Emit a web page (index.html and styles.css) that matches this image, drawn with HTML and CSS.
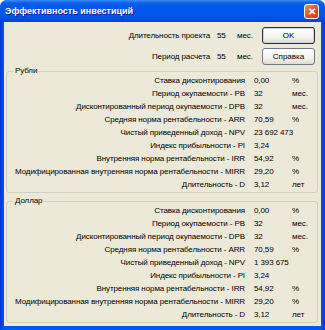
FILE: index.html
```html
<!DOCTYPE html>
<html lang="ru">
<head>
    <meta charset="UTF-8">
    <title>Эффективность инвестиций</title>
    <link rel="stylesheet" href="styles.css">
</head>
<body>
    <div class="window">
        <div class="titlebar">
            <span class="title">Эффективность инвестиций</span>
            <span class="close">&#x2715;</span>
        </div>
        <div class="content">
            <div class="top">
                <span class="label">Длительность проекта</span>
                <span class="value">55</span>
                <span class="unit">мес.</span>
                <button class="btn btn-default">OK</button>

                <span class="label">Период расчета</span>
                <span class="value">55</span>
                <span class="unit">мес.</span>
                <button class="btn">Справка</button>
            </div>

            <div class="group">
                <span class="legend">Рубли</span>
                <div class="rows">
                    <span class="label">Ставка дисконтирования</span><span class="value">0,00</span><span class="unit">%</span>
                    <span class="label">Период окупаемости - PB</span><span class="value">32</span><span class="unit">мес.</span>
                    <span class="label">Дисконтированный период окупаемости - DPB</span><span class="value">32</span><span class="unit">мес.</span>
                    <span class="label">Средняя норма рентабельности - ARR</span><span class="value">70,59</span><span class="unit">%</span>
                    <span class="label">Чистый приведенный доход - NPV</span><span class="value">23 692 473</span><span class="unit"></span>
                    <span class="label">Индекс прибыльности - PI</span><span class="value">3,24</span><span class="unit"></span>
                    <span class="label">Внутренняя норма рентабельности - IRR</span><span class="value">54,92</span><span class="unit">%</span>
                    <span class="label">Модифицированная внутренняя норма рентабельности - MIRR</span><span class="value">29,20</span><span class="unit">%</span>
                    <span class="label">Длительность - D</span><span class="value">3,12</span><span class="unit">лет</span>
                </div>
            </div>

            <div class="group">
                <span class="legend">Доллар</span>
                <div class="rows">
                    <span class="label">Ставка дисконтирования</span><span class="value">0,00</span><span class="unit">%</span>
                    <span class="label">Период окупаемости - PB</span><span class="value">32</span><span class="unit">мес.</span>
                    <span class="label">Дисконтированный период окупаемости - DPB</span><span class="value">32</span><span class="unit">мес.</span>
                    <span class="label">Средняя норма рентабельности - ARR</span><span class="value">70,59</span><span class="unit">%</span>
                    <span class="label">Чистый приведенный доход - NPV</span><span class="value">1 393 675</span><span class="unit"></span>
                    <span class="label">Индекс прибыльности - PI</span><span class="value">3,24</span><span class="unit"></span>
                    <span class="label">Внутренняя норма рентабельности - IRR</span><span class="value">54,92</span><span class="unit">%</span>
                    <span class="label">Модифицированная внутренняя норма рентабельности - MIRR</span><span class="value">29,20</span><span class="unit">%</span>
                    <span class="label">Длительность - D</span><span class="value">3,12</span><span class="unit">лет</span>
                </div>
            </div>
        </div>
    </div>
</body>
</html>
```

FILE: styles.css
```css
body {
    margin: 0;
    padding: 0;
    font-family: "Liberation Sans", Arial, sans-serif;
    font-size: 8px;
    letter-spacing: -0.1px;
    color: #000;
    background: #fff;
}
.window {
    width: 325px;
    height: 330px;
    box-sizing: border-box;
    display: flex;
    flex-direction: column;
    background: linear-gradient(to right, #0831d9, #0058ee 4px, #0058ee 321px, #0831d9);
    border-radius: 7px 7px 0 0;
    overflow: hidden;
}
.titlebar {
    height: 22px;
    flex: none;
    display: flex;
    align-items: center;
    justify-content: space-between;
    padding: 0 6px 0 5px;
    background: linear-gradient(to bottom, #3d8af7 0, #0a5fe6 3px, #0058ee 8px, #0054e3 17px, #0046cc 22px);
}
.title {
    color: #fff;
    font-family: "Liberation Sans", Arial, sans-serif;
    font-weight: bold;
    font-size: 9px;
    letter-spacing: 0;
    text-shadow: 1px 1px 0 #0a1e8c;
}
.close {
    width: 13px;
    height: 13px;
    border: 1px solid #fff;
    border-radius: 3px;
    background: linear-gradient(135deg, #f09070, #e0582c 50%, #c23d18);
    color: #fff;
    font-size: 10px;
    font-weight: bold;
    line-height: 13px;
    text-align: center;
    letter-spacing: 0;
}
.content {
    flex: 1;
    margin: 0 4px 4px;
    background: #ece9d8;
    display: flex;
    flex-direction: column;
}
.top {
    display: grid;
    grid-template-columns: minmax(0, 1fr) 20px 25px 53px;
    grid-template-rows: 17px 17px;
    row-gap: 4px;
    align-items: center;
    padding: 5px 6px 0 0;
    margin-bottom: 6px;
}
.top .label {
    text-align: right;
    padding-right: 7px;
}
.btn {
    height: 17px;
    width: 53px;
    padding: 0;
    font-family: inherit;
    font-size: 8px;
    color: #000;
    border: 1px solid #6f7c8e;
    border-radius: 3px;
    background: linear-gradient(to bottom, #ffffff, #f4f3ee 60%, #dedbcf);
}
.btn-default {
    border-color: #2a2f3a;
    box-shadow: inset 0 0 0 1px #c8d4e8;
}
.group {
    margin: 0 3px 0 2px;
    border: 1px solid #d0d0bf;
    border-radius: 3px;
    padding: 0 0 1px;
}
.group + .group {
    margin-top: 8px;
}
.legend {
    display: block;
    width: fit-content;
    margin: -7px 0 -3px 6px;
    padding: 0 2px;
    line-height: 12px;
    background: #ece9d8;
}
.rows {
    display: grid;
    grid-template-columns: minmax(0, 1fr) 38px 25px;
    grid-auto-rows: 13px;
    align-items: center;
    white-space: nowrap;
}
.rows .label {
    text-align: right;
    padding-right: 9px;
}
```
